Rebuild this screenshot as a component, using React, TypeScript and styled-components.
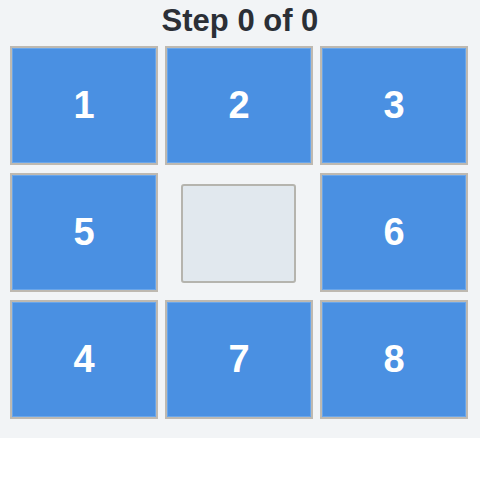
import React from 'react';
import styled, { createGlobalStyle } from 'styled-components';

const GlobalStyle = createGlobalStyle`
  body {
    margin: 0;
    background: #ffffff;
    font-family: 'Liberation Sans', Arial, sans-serif;
  }
`;

const tiles: (number | null)[] = [1, 2, 3, 5, null, 6, 4, 7, 8];

const App: React.FC = () => {
  return (
    <>
      <GlobalStyle />
      <Board>
        <Title>Step 0 of 0</Title>
        <Grid>
          {tiles.map((n, i) =>
            n === null ? (
              <EmptyCell key={i}>
                <EmptyTile />
              </EmptyCell>
            ) : (
              <Tile key={i}>{n}</Tile>
            ),
          )}
        </Grid>
      </Board>
    </>
  );
};

export default App;

const Board = styled.div`
  background: #f2f4f6;
  height: 438px;
  box-sizing: border-box;
  padding: 0 10px;
`;

const Title = styled.div`
  height: 46px;
  padding-top: 1px;
  box-sizing: border-box;
  text-align: center;
  font-weight: bold;
  font-size: 31px;
  line-height: 40px;
  color: #2b2f36;
`;

const Grid = styled.div`
  display: grid;
  grid-template-columns: repeat(3, 148px);
  grid-template-rows: repeat(3, 119px);
  column-gap: 7px;
  row-gap: 8px;
`;

const Tile = styled.div`
  box-sizing: border-box;
  display: flex;
  align-items: center;
  justify-content: center;
  background: #4a90e2;
  border: 2px solid #beb9b1;
  box-shadow: inset 0 0 0 1px #6aa6ea;
  color: #ffffff;
  font-weight: bold;
  font-size: 38px;
`;

const EmptyCell = styled.div`
  display: flex;
  padding: 11px 17px 9px 16px;
`;

const EmptyTile = styled.div`
  flex: 1;
  box-sizing: border-box;
  background: #e1e8ee;
  border: 2px solid #b5b4ae;
  border-radius: 3px;
`;
